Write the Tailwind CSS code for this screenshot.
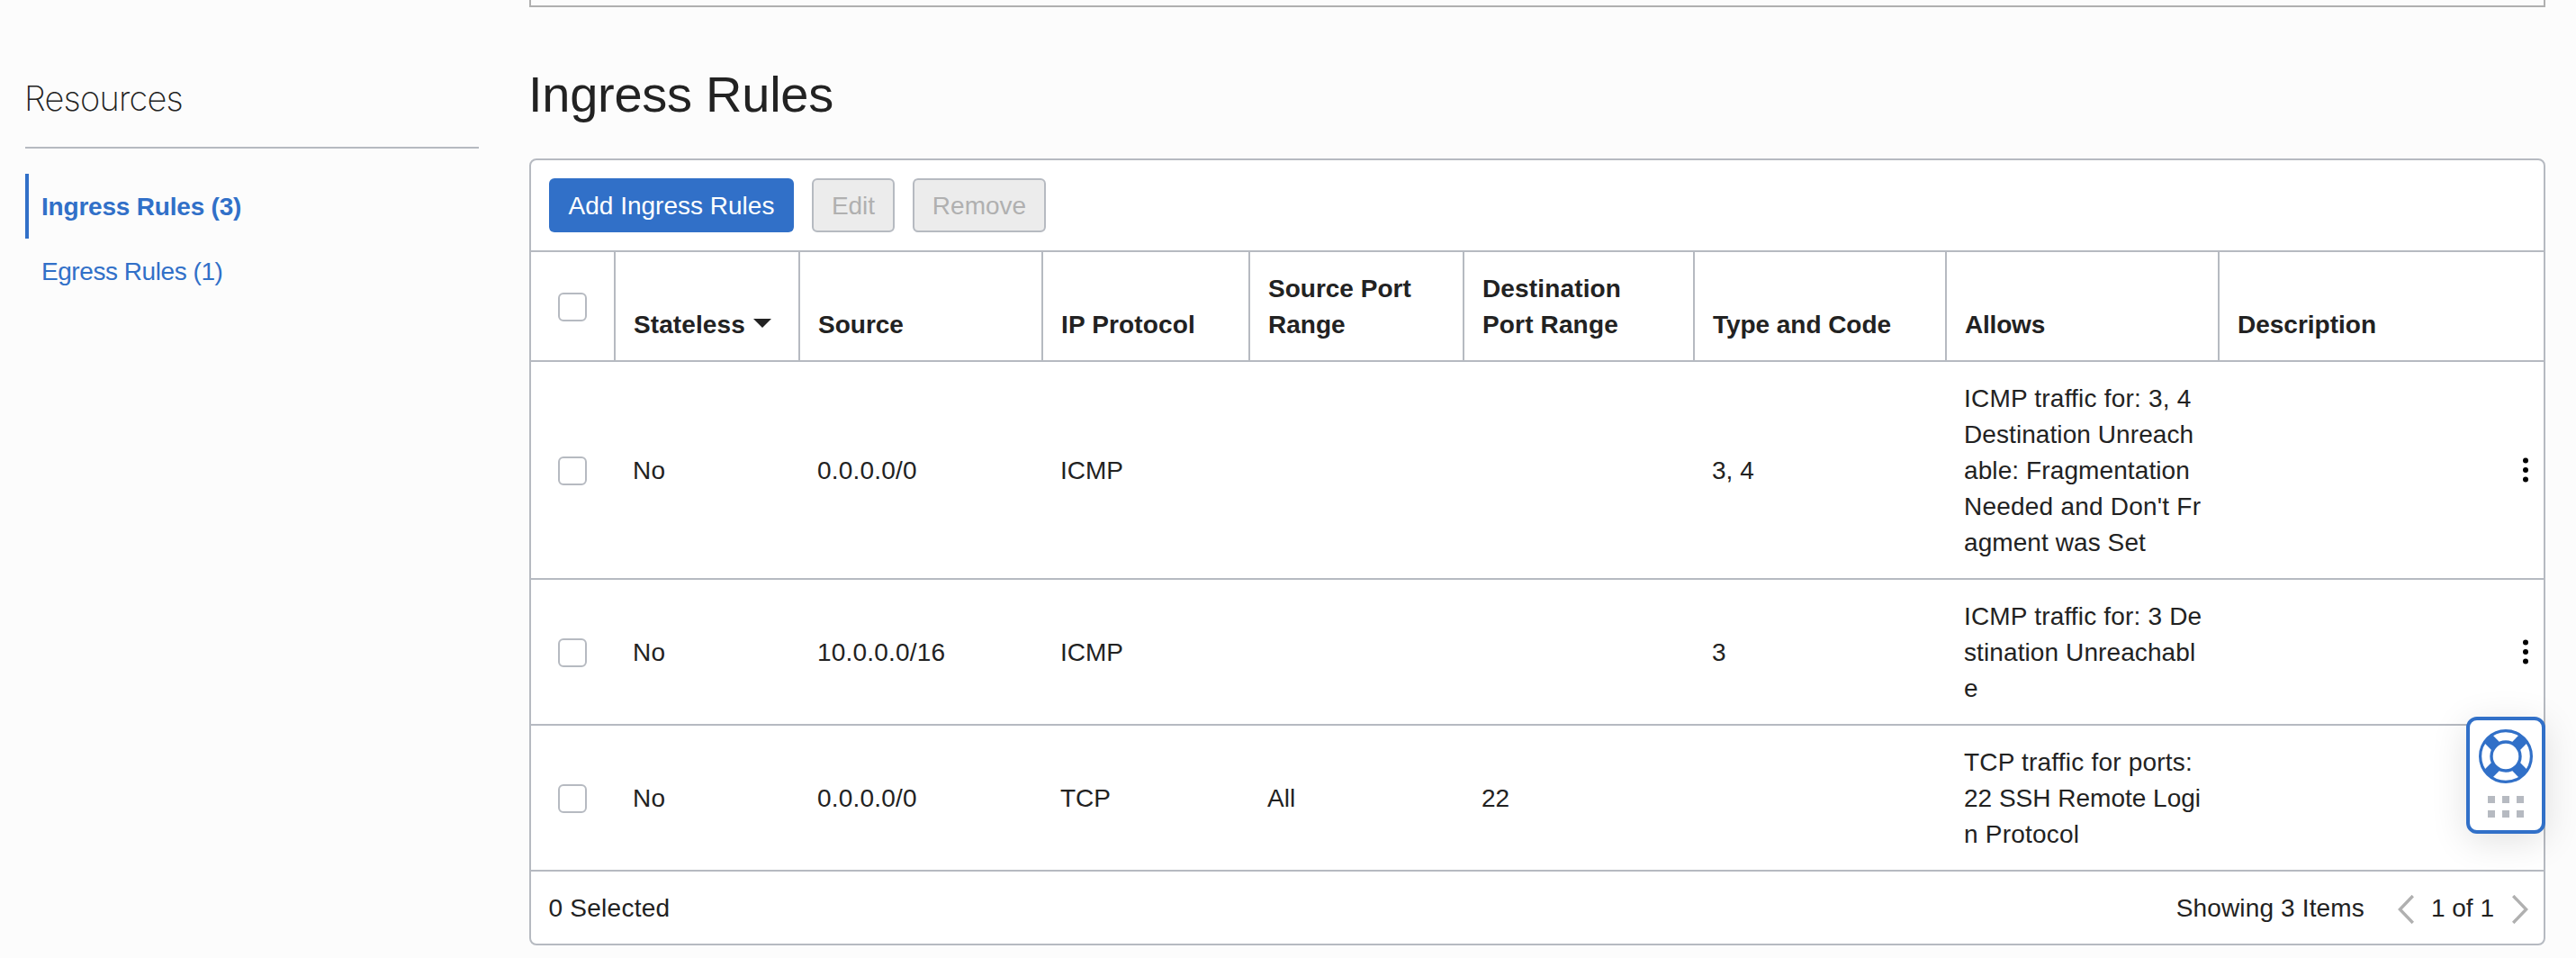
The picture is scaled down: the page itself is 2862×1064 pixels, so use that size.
<!DOCTYPE html>
<html lang="en">
<head>
<meta charset="utf-8">
<title>Ingress Rules</title>
<script src="https://cdn.jsdelivr.net/npm/@tailwindcss/browser@4"></script>
</head>
<body class="h-[1064px] w-[2862px] overflow-hidden bg-[#fcfcfc] font-['Liberation_Sans',Arial,sans-serif] text-[28px] leading-10 text-[#222]">
<div class="flex">

  <!-- Sidebar -->
  <aside class="ml-7 w-[504px] shrink-0">
    <h2 class="-indent-px h-[165px] border-b-2 border-[#b6bac1] pt-[85px] font-['Inter',sans-serif] text-[38px] font-[150] leading-[48px] tracking-[-0.8px]">Resources</h2>
    <nav class="mt-7">
      <a class="flex h-[72px] items-center border-l-4 border-[#3170c8] pt-[2px] pl-[14px] font-bold tracking-[-0.2px] text-[#3170c8]">Ingress Rules (3)</a>
      <a class="flex h-[72px] items-center pt-[2px] pl-[18px] tracking-[-0.44px] text-[#3170c8]">Egress Rules (1)</a>
    </nav>
  </aside>

  <!-- Content -->
  <main class="ml-14 w-[2240px] shrink-0">
    <div class="h-2 border-x-2 border-b-2 border-[#b0b0b0]"></div>
    <h1 class="-ml-px flex h-[168px] pt-[61px] text-[56px] leading-[72px] tracking-[-0.26px]">Ingress Rules</h1>

    <section class="h-[874px] rounded-[8px] border-2 border-[#b6bac1] bg-white">
      <div class="flex h-[102px] items-center gap-5 border-b-2 border-[#b6bac1] pl-5">
        <button class="h-[60px] w-[272px] rounded-[6px] bg-[#3170c8] pt-[2px] text-white">Add Ingress Rules</button>
        <button class="h-[60px] w-[92px] rounded-[6px] border-2 border-[#b6bac1] bg-[#ececec] pt-[2px] text-[#b0b0b0]">Edit</button>
        <button class="h-[60px] w-[148px] rounded-[6px] border-2 border-[#b6bac1] bg-[#ececec] pt-[2px] text-[#b0b0b0]">Remove</button>
      </div>

      <!-- Column headings -->
      <div class="grid h-[122px] grid-cols-[92px_205px_270px_230px_238px_256px_280px_303px_362px] border-b-2 border-[#b6bac1] font-bold *:flex *:items-end *:border-l-2 *:border-[#b6bac1] *:pb-[19px] *:pl-5">
        <div class="items-start! border-l-0! pt-[45px] pl-[30px]!"><span class="size-8 rounded-[6px] border-2 border-[#b6bac1]"></span></div>
        <div class="gap-[9px] tracking-[0.1px]">Stateless<svg class="mb-[17px] h-[10px] w-5" viewBox="0 0 20 10"><path d="M0 0h20L10 10z" fill="#222"/></svg></div>
        <div>Source</div>
        <div class="tracking-[0.16px]">IP Protocol</div>
        <div>Source Port<br>Range</div>
        <div class="tracking-[0.15px]">Destination<br>Port Range</div>
        <div class="tracking-[-0.05px]">Type and Code</div>
        <div class="tracking-[-0.2px]">Allows</div>
        <div>Description</div>
      </div>

      <!-- Rules -->
      <div class="grid h-[242px] grid-cols-[92px_205px_270px_230px_238px_256px_280px_303px_362px] items-center border-b-2 border-[#b6bac1] *:pt-[2px] *:pl-[21px]">
        <div class="pl-[30px]!"><span class="block size-8 rounded-[6px] border-2 border-[#b6bac1]"></span></div>
        <div class="tracking-[0.4px]">No</div>
        <div class="tracking-[0.2px]">0.0.0.0/0</div>
        <div>ICMP</div>
        <div></div>
        <div></div>
        <div>3, 4</div>
        <div class="whitespace-nowrap *:block">
          <span class="tracking-[0.21px]">ICMP traffic for: 3, 4</span>
          <span class="tracking-[0.08px]">Destination Unreach</span>
          <span class="tracking-[0.1px]">able: Fragmentation</span>
          <span class="tracking-[0.22px]">Needed and Don't Fr</span>
          <span class="tracking-[0.08px]">agment was Set</span>
        </div>
        <div class="flex justify-end pt-0! pr-[17px]"><svg class="h-7 w-[6px]" viewBox="0 0 6 28"><circle cx="3" cy="3.6" r="3"/><circle cx="3" cy="14" r="3"/><circle cx="3" cy="24.4" r="3"/></svg></div>
      </div>
      <div class="grid h-[162px] grid-cols-[92px_205px_270px_230px_238px_256px_280px_303px_362px] items-center border-b-2 border-[#b6bac1] *:pt-[2px] *:pl-[21px]">
        <div class="pl-[30px]!"><span class="block size-8 rounded-[6px] border-2 border-[#b6bac1]"></span></div>
        <div class="tracking-[0.4px]">No</div>
        <div class="tracking-[0.2px]">10.0.0.0/16</div>
        <div>ICMP</div>
        <div></div>
        <div></div>
        <div>3</div>
        <div class="whitespace-nowrap *:block">
          <span class="tracking-[0.18px]">ICMP traffic for: 3 De</span>
          <span class="tracking-[0.1px]">stination Unreachabl</span>
          <span>e</span>
        </div>
        <div class="flex justify-end pt-0! pr-[17px]"><svg class="h-7 w-[6px]" viewBox="0 0 6 28"><circle cx="3" cy="3.6" r="3"/><circle cx="3" cy="14" r="3"/><circle cx="3" cy="24.4" r="3"/></svg></div>
      </div>
      <div class="grid h-[162px] grid-cols-[92px_205px_270px_230px_238px_256px_280px_303px_362px] items-center border-b-2 border-[#b6bac1] *:pt-[2px] *:pl-[21px]">
        <div class="pl-[30px]!"><span class="block size-8 rounded-[6px] border-2 border-[#b6bac1]"></span></div>
        <div class="tracking-[0.4px]">No</div>
        <div class="tracking-[0.2px]">0.0.0.0/0</div>
        <div>TCP</div>
        <div>All</div>
        <div>22</div>
        <div></div>
        <div class="whitespace-nowrap *:block">
          <span class="tracking-[0.2px]">TCP traffic for ports:</span>
          <span>22 SSH Remote Logi</span>
          <span class="tracking-[0.22px]">n Protocol</span>
        </div>
        <div></div>
      </div>

      <!-- Footer -->
      <div class="flex h-20 items-center pt-[2px] pr-[17px] pl-[19.5px]">
        <span class="tracking-[0.25px]">0 Selected</span>
        <span class="ml-auto tracking-[0.15px]">Showing 3 Items</span>
        <svg class="mt-[2px] ml-[37px] h-8 w-[18px]" viewBox="0 0 18 32" fill="none" stroke="#b0b0b0" stroke-width="3.4"><path d="M16.8 1L2.4 16l14.4 15"/></svg>
        <span class="mr-5 ml-[19px]">1 of 1</span>
        <svg class="mt-[2px] h-8 w-[18px]" viewBox="0 0 18 32" fill="none" stroke="#b0b0b0" stroke-width="3.4"><path d="M1.2 1l14.4 15L1.2 31"/></svg>
      </div>
    </section>
  </main>
</div>

<!-- Floating help button -->
<div class="absolute top-[796px] left-[2740px] flex h-[130px] w-[88px] flex-col items-center rounded-[12px] border-4 border-[#3170c8] bg-white pt-[10px] shadow-[0_8px_40px_rgba(0,0,0,0.12)]">
  <svg class="size-[60px]" viewBox="-30 -30 60 60" fill="none" stroke="#3170c8">
    <circle r="28.4" stroke-width="3.2"/>
    <circle r="16" stroke-width="3.4"/>
    <path stroke-width="12.6" d="M11.3 11.3L20.2 20.2M-11.3 11.3L-20.2 20.2M11.3 -11.3L20.2 -20.2M-11.3 -11.3L-20.2 -20.2"/>
  </svg>
  <div class="mt-[14px] grid grid-cols-3 gap-2 *:size-2 *:bg-[#b6bac1]"><i></i><i></i><i></i><i></i><i></i><i></i></div>
</div>
</body>
</html>
